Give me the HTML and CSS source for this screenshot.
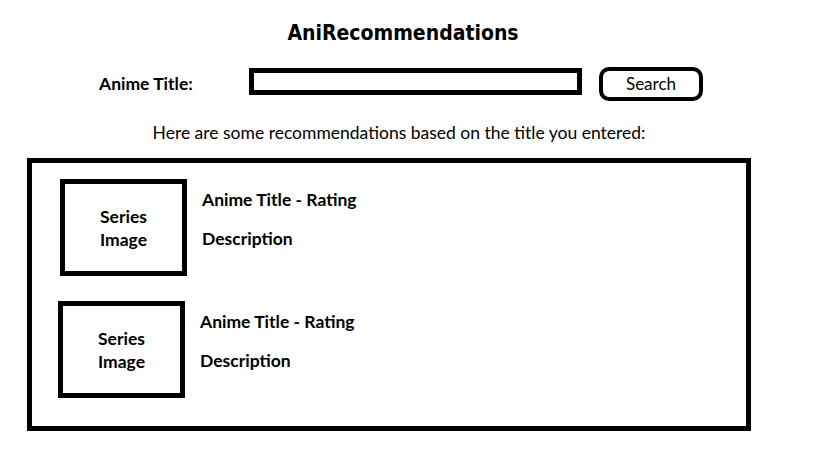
FILE: index.html
```html
<!DOCTYPE html>
<html>
<head>
<meta charset="utf-8">
<link rel="stylesheet" href="styles.css">
</head>
<body>
<div class="page">
  <h1 class="title">AniRecommendations</h1>
  <div class="search-row">
    <label class="search-label">Anime Title:</label>
    <div class="search-input"></div>
    <div class="search-button">Search</div>
  </div>
  <p class="intro">Here are some recommendations based on the title you entered:</p>
  <div class="results">
    <div class="item item-first">
      <div class="thumb">Series<br>Image</div>
      <div class="info">
        <div class="info-title">Anime Title - Rating</div>
        <div class="info-desc">Description</div>
      </div>
    </div>
    <div class="item">
      <div class="thumb">Series<br>Image</div>
      <div class="info">
        <div class="info-title">Anime Title - Rating</div>
        <div class="info-desc">Description</div>
      </div>
    </div>
  </div>
</div>
</body>
</html>
```
FILE: styles.css
```css
html, body {
  margin: 0;
  padding: 0;
  background: #fff;
}
body {
  width: 819px;
  height: 460px;
  overflow: hidden;
  font-family: Lato, "Liberation Sans", sans-serif;
  color: #000;
}
.page {
  padding-top: 19px;
}
.title {
  margin: 0;
  font-family: "DejaVu Sans Condensed", "Liberation Sans Narrow", sans-serif;
  font-weight: 700;
  font-size: 21px;
  line-height: 28px;
  text-align: center;
  padding-right: 13px;
}
.search-row {
  display: flex;
  align-items: flex-start;
  margin-top: 20px;
  padding-left: 99px;
}
.search-label {
  align-self: center;
  font-weight: 700;
  font-size: 17.5px;
  line-height: 22px;
  width: 150px;
}
.search-input {
  margin-top: 1px;
  width: 323px;
  height: 17px;
  border: 5px solid #000;
}
.search-button {
  margin-left: 17px;
  width: 96px;
  height: 26px;
  border: 4px solid #000;
  border-radius: 10px;
  font-size: 17px;
  line-height: 26px;
  text-align: center;
}
.intro {
  margin: 21px 0 0;
  font-size: 17.5px;
  line-height: 22px;
  text-align: center;
  padding-right: 21px;
}
.results {
  margin: 14px 0 0 27px;
  width: 688px;
  height: 247px;
  border: 5px solid #000;
  padding: 16px 0 0 26px;
  display: flex;
  flex-direction: column;
  gap: 25px;
}
.item {
  display: flex;
  align-items: flex-start;
}
.item-first {
  margin-left: 2px;
}
.thumb {
  width: 117px;
  height: 87px;
  border: 5px solid #000;
  display: flex;
  align-items: center;
  justify-content: center;
  text-align: center;
  font-weight: 700;
  font-size: 17.5px;
  line-height: 23px;
}
.info {
  margin-left: 15px;
  font-weight: 700;
  font-size: 17.5px;
}
.info-title {
  margin-top: 10px;
  line-height: 22px;
}
.info-desc {
  margin-top: 17px;
  line-height: 22px;
}
```
